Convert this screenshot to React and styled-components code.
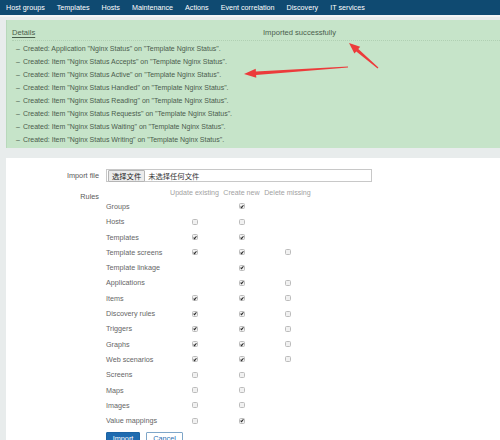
import styled, { createGlobalStyle } from "styled-components";

const GlobalStyle = createGlobalStyle`
  html, body {
    margin: 0;
    padding: 0;
    background: #e8ecec;
    font-family: "Liberation Sans", Arial, "Noto Sans CJK SC", sans-serif;
    overflow: hidden;
  }
`;

const Page = styled.div`
  position: relative;
  width: 500px;
  height: 440px;
  overflow: hidden;
`;

const TopNav = styled.nav`
  display: flex;
  align-items: center;
  gap: 12px;
  height: 15px;
  padding-left: 6px;
  background: #0f4a71;
  border-bottom: 2px solid #f2f5f5;
`;

const NavItem = styled.span`
  color: #fff;
  font-size: 7.2px;
  white-space: nowrap;
`;

const Content = styled.div`
  display: flex;
  flex-direction: column;
  gap: 10px;
  width: 520px;
  padding: 3px 0 0 6px;
`;

const MessageBox = styled.div`
  height: 128px;
  box-sizing: border-box;
  background: #c6e4c9;
  border-left: 1px solid #b8d8bb;
  padding: 5px 0 0 5px;
`;

const MessageHeader = styled.div`
  display: flex;
  align-items: center;
  height: 15px;
  border-bottom: 1px dotted #b0d0b3;
  font-size: 7.6px;
  color: #4a5e4c;
`;

const DetailsLink = styled.span`
  width: 251px;
  text-decoration: underline;
  text-underline-offset: 1.5px;
`;

const MessageList = styled.ul`
  list-style: none;
  margin: 0;
  padding: 1px 0 0 4px;
`;

const MessageItem = styled.li`
  display: flex;
  align-items: center;
  gap: 3px;
  height: 13px;
  font-size: 7px;
  color: #4b5c4d;
  white-space: nowrap;

  &::before {
    content: "–";
  }
`;

const Panel = styled.div`
  background: #fff;
  height: 300px;
  padding-top: 11px;
`;

const FormRow = styled.div`
  display: grid;
  grid-template-columns: 93px 1fr;
  column-gap: 7px;
  margin-bottom: ${(p) => p.$mb || 0}px;
`;

const Label = styled.div`
  text-align: right;
  font-size: 7.3px;
  color: #5a5a5a;
  padding-top: ${(p) => p.$pt || 0}px;
`;

const FileInput = styled.div`
  display: flex;
  align-items: center;
  gap: 3px;
  width: 266px;
  height: 13px;
  box-sizing: border-box;
  border: 1px solid #c8c8c8;
  padding-left: 1px;
  font-size: 7.3px;
  color: #333;
`;

const FileButton = styled.span`
  display: flex;
  align-items: center;
  height: 10px;
  padding: 0 3px;
  background: #ececec;
  border: 1px solid #b5b5b5;
  border-radius: 1px;
  color: #222;
`;

const RulesGrid = styled.div`
  display: grid;
  grid-template-columns: 60px 49px 37px 47px;
  column-gap: 4px;
  grid-auto-rows: 15.3px;
  grid-template-rows: 11.8px;
`;

const ColHead = styled.div`
  font-size: 7.1px;
  color: #a2a2a2;
  white-space: nowrap;
  display: flex;
  align-items: center;
  justify-content: center;
`;

const RuleName = styled.div`
  font-size: 7.2px;
  color: #666;
  white-space: nowrap;
  display: flex;
  align-items: center;
`;

const Cell = styled.div`
  display: flex;
  align-items: center;
  justify-content: center;
`;

const Box = styled.span`
  display: flex;
  align-items: center;
  justify-content: center;
  width: 6px;
  height: 6px;
  box-sizing: border-box;
  border: 1px solid #bcbcbc;
  border-radius: 1.5px;
  background: #f1f1f1;
`;

const Buttons = styled.div`
  display: flex;
  gap: 6px;
  margin-top: 4px;
`;

const Button = styled.span`
  display: flex;
  align-items: center;
  justify-content: center;
  width: ${(p) => p.$w}px;
  height: 13px;
  box-sizing: border-box;
  font-size: 7.3px;
  border-radius: 1px;
  border: 1px solid ${(p) => (p.$primary ? "#1b63a3" : "#7ea6c8")};
  background: ${(p) => (p.$primary ? "#1f6bb0" : "#fff")};
  color: ${(p) => (p.$primary ? "#fff" : "#1f6bb0")};
`;

const Annotations = styled.svg`
  position: absolute;
  left: 0;
  top: 0;
  pointer-events: none;
`;

const navItems = [
  "Host groups",
  "Templates",
  "Hosts",
  "Maintenance",
  "Actions",
  "Event correlation",
  "Discovery",
  "IT services",
];

const messages = [
  'Created: Application "Nginx Status" on "Template Nginx Status".',
  'Created: Item "Nginx Status Accepts" on "Template Nginx Status".',
  'Created: Item "Nginx Status Active" on "Template Nginx Status".',
  'Created: Item "Nginx Status Handled" on "Template Nginx Status".',
  'Created: Item "Nginx Status Reading" on "Template Nginx Status".',
  'Created: Item "Nginx Status Requests" on "Template Nginx Status".',
  'Created: Item "Nginx Status Waiting" on "Template Nginx Status".',
  'Created: Item "Nginx Status Writing" on "Template Nginx Status".',
];

// null = no checkbox, true = checked, false = unchecked
const rules = [
  ["Groups", null, true, null],
  ["Hosts", false, false, null],
  ["Templates", true, true, null],
  ["Template screens", true, true, false],
  ["Template linkage", null, true, null],
  ["Applications", null, true, false],
  ["Items", true, true, false],
  ["Discovery rules", true, true, false],
  ["Triggers", true, true, false],
  ["Graphs", true, true, false],
  ["Web scenarios", true, true, false],
  ["Screens", false, false, null],
  ["Maps", false, false, null],
  ["Images", false, false, null],
  ["Value mappings", false, true, null],
];

const Checkbox = ({ checked }) => (
  <Box>
    {checked && (
      <svg width="5" height="5" viewBox="0 0 10 10">
        <path
          d="M1.5 5.2 L4 7.8 L8.6 1.8"
          fill="none"
          stroke="#2a2a2a"
          strokeWidth="2.6"
        />
      </svg>
    )}
  </Box>
);

const Rule = ({ name, cols }) => (
  <>
    <RuleName>{name}</RuleName>
    {cols.map((c, i) => (
      <Cell key={i}>{c !== null && <Checkbox checked={c} />}</Cell>
    ))}
  </>
);

const App = () => {
  return (
    <>
      <GlobalStyle />
      <Page>
        <TopNav>
          {navItems.map((item) => (
            <NavItem key={item}>{item}</NavItem>
          ))}
        </TopNav>
        <Content>
          <MessageBox>
            <MessageHeader>
              <DetailsLink>Details</DetailsLink>
              <span>Imported successfully</span>
            </MessageHeader>
            <MessageList>
              {messages.map((m) => (
                <MessageItem key={m}>{m}</MessageItem>
              ))}
            </MessageList>
          </MessageBox>
          <Panel>
            <FormRow $mb={5}>
              <Label $pt={2}>Import file</Label>
              <FileInput>
                <FileButton>选择文件</FileButton>
                未选择任何文件
              </FileInput>
            </FormRow>
            <FormRow>
              <Label $pt={5}>Rules</Label>
              <div>
                <RulesGrid>
                  <div />
                  <ColHead>Update existing</ColHead>
                  <ColHead>Create new</ColHead>
                  <ColHead>Delete missing</ColHead>
                  {rules.map(([name, ...cols]) => (
                    <Rule key={name} name={name} cols={cols} />
                  ))}
                </RulesGrid>
                <Buttons>
                  <Button $primary $w={34}>
                    Import
                  </Button>
                  <Button $w={37}>Cancel</Button>
                </Buttons>
              </div>
            </FormRow>
          </Panel>
        </Content>
        <Annotations width="500" height="440" viewBox="0 0 500 440">
          <polygon
            fill="#ec3b3b"
            points="244,74 255.7,68.7 255.9,71.4 348,66.5 348,67.5 256.1,75 256.3,77.7"
          />
          <polygon
            fill="#ec3b3b"
            points="349,43 360.2,46.8 358.3,49 378.4,67.5 377.6,68.5 356.3,51.4 354.4,53.6"
          />
        </Annotations>
      </Page>
    </>
  );
};

export default App;
